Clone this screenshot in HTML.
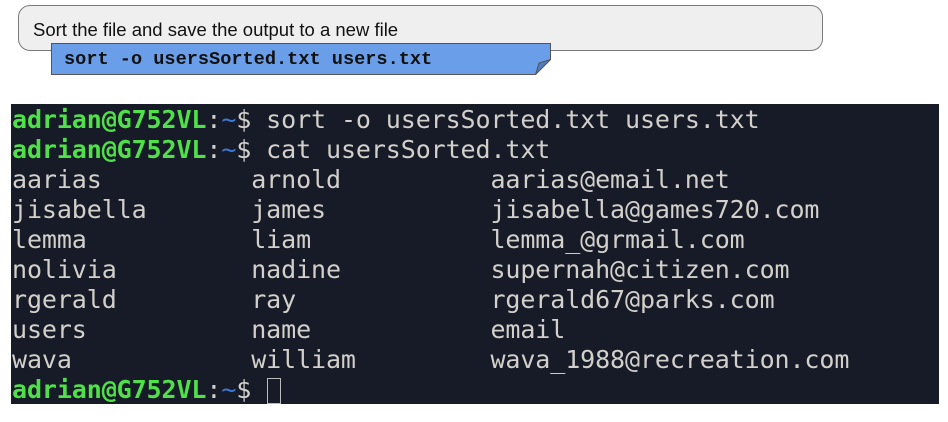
<!DOCTYPE html>
<html><head><meta charset="utf-8"><style>
html,body{margin:0;padding:0;background:#fff;width:948px;height:422px;overflow:hidden;position:relative}
.bubble{position:absolute;left:18px;top:5px;width:803px;height:44px;border:1px solid #7a7a7a;border-radius:12px;background:#efefef;box-sizing:content-box}
.bubble span{position:absolute;left:14px;top:13px;font:18.5px "Liberation Sans",sans-serif;color:#111}
.note{position:absolute;left:51px;top:43px}
.note span{position:absolute;left:13px;top:6px;font:bold 18.6px "Liberation Mono",monospace;color:#111;white-space:pre}
.term{position:absolute;left:11px;top:104px;width:928px;height:300px;background:#161b27;font:25px "DejaVu Sans Mono",monospace;color:#d3d0cb;line-height:30px;letter-spacing:-0.1px}
.term div{padding-left:1px;height:30px;white-space:pre;position:relative;top:1px}
.g{color:#4fe04a;font-weight:bold}.b{color:#3b7ad6}
.cur{display:inline-block;width:14px;height:26px;border:1px solid #bbb;vertical-align:-6px;box-sizing:border-box;margin-left:1px}
</style></head><body>
<div class="bubble"><span>Sort the file and save the output to a new file</span></div>
<div class="note"><svg width="501" height="33" style="position:absolute;left:0;top:0"><path d="M0.5 0.5H499.5V16.5L484.5 31.5H0.5Z" fill="#6b9ee9" stroke="#555"/><path d="M484.5 31.5L488 20L499.5 16.5Z" fill="#4d7bc4" stroke="#555"/></svg><span>sort -o usersSorted.txt users.txt</span></div>
<div class="term"><div><span class="g">adrian@G752VL</span>:<span class="b">~</span>$ sort -o usersSorted.txt users.txt</div><div><span class="g">adrian@G752VL</span>:<span class="b">~</span>$ cat usersSorted.txt</div><div>aarias          arnold          aarias@email.net</div><div>jisabella       james           jisabella@games720.com</div><div>lemma           liam            lemma_@grmail.com</div><div>nolivia         nadine          supernah@citizen.com</div><div>rgerald         ray             rgerald67@parks.com</div><div>users           name            email</div><div>wava            william         wava_1988@recreation.com</div><div><span class="g">adrian@G752VL</span>:<span class="b">~</span>$ <span class="cur"></span></div></div>
</body></html>
